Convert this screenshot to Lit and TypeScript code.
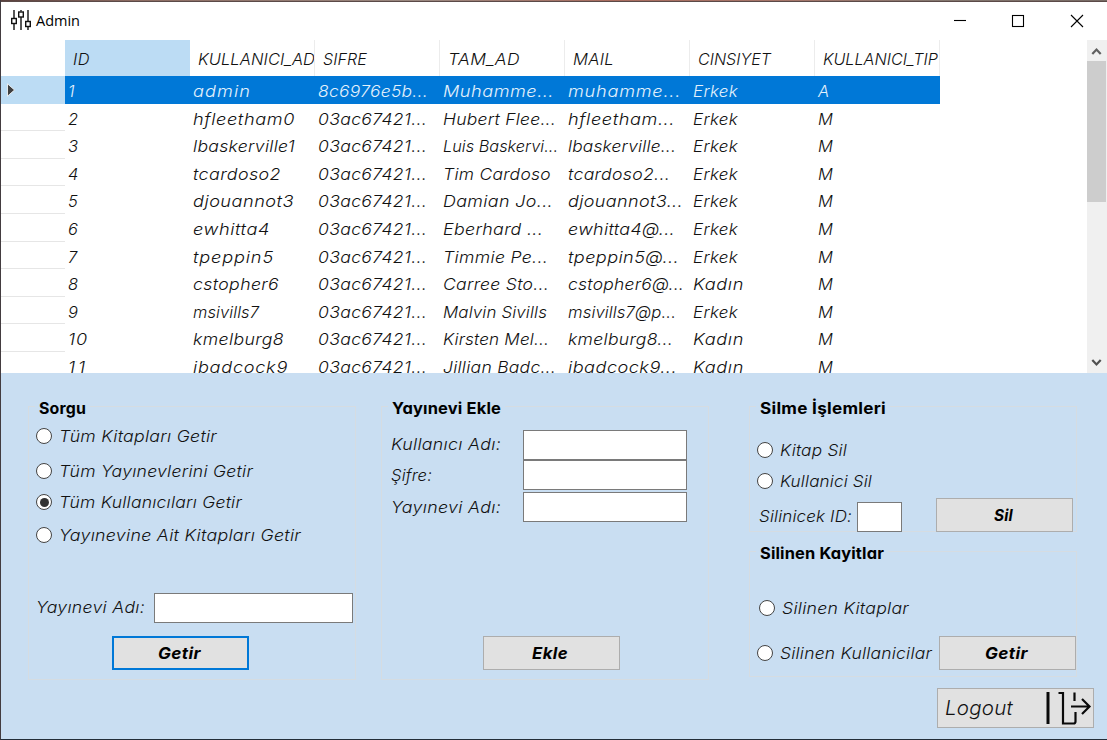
import { LitElement, html, css } from "lit";
import { customElement, property } from "lit/decorators.js";

/** A line of text spread over a given width, partly by glyph width, partly by letter spacing. */
@customElement("fit-text")
class FitText extends LitElement {
  @property() text = "";
  @property({ type: Number }) w = 0;

  static styles = css`
    :host { display: inline-block; white-space: pre; line-height: 20px; height: 20px; flex: none; }
    .run { display: inline-block; transform-origin: 0 50%; }
  `;

  updated() {
    const run = this.renderRoot.querySelector(".run") as HTMLElement;
    run.style.letterSpacing = "0px";
    run.style.transform = "none";
    const natural = run.getBoundingClientRect().width;
    const gaps = Array.from(this.text).length;
    this.style.width = this.w + "px";
    if (gaps < 2) return;
    const scale = Math.min(1.1, Math.max(0.92, 1 + (this.w / natural - 1) * 0.7));
    run.style.letterSpacing = ((this.w + 1) / scale - natural) / gaps + "px";
    run.style.transform = `scaleX(${scale})`;
  }

  render() {
    return html`<span class="run">${this.text}</span>`;
  }
}

type Cell = [string, number];

const HEAD: Cell[] = [["ID", 16], ["KULLANICI_AD", 116], ["SIFRE", 43], ["TAM_AD", 71], ["MAIL", 40], ["CINSIYET", 72], ["KULLANICI_TIP", 114]];

const USERS: [Cell, Cell, Cell, string][] = [
  [["admin", 57], ["Muhamme...", 110], ["muhamme...", 112], "Erkek"],
  [["hfleetham0", 101], ["Hubert Flee...", 112], ["hfleetham...", 106], "Erkek"],
  [["lbaskerville1", 101], ["Luis Baskervi...", 114], ["lbaskerville...", 107], "Erkek"],
  [["tcardoso2", 87], ["Tim Cardoso", 107], ["tcardoso2...", 101], "Erkek"],
  [["djouannot3", 100], ["Damian Jo...", 109], ["djouannot3...", 114], "Erkek"],
  [["ewhitta4", 76], ["Eberhard ...", 99], ["ewhitta4@...", 106], "Erkek"],
  [["tpeppin5", 80], ["Timmie Pe...", 104], ["tpeppin5@...", 110], "Erkek"],
  [["cstopher6", 85], ["Carree Sto...", 105], ["cstopher6@...", 115], "Kadın"],
  [["msivills7", 65], ["Malvin Sivills", 103], ["msivills7@p...", 107], "Erkek"],
  [["kmelburg8", 90], ["Kirsten Mel...", 105], ["kmelburg8...", 104], "Kadın"],
  [["ibadcock9", 94], ["Jillian Badc...", 112], ["ibadcock9...", 108], "Kadın"],
];

const t = (text: string, w: number) => html`<fit-text .text=${text} .w=${w}></fit-text>`;

const radio = (text: string, w: number, cls = "", on = false) => html`
  <label class="radio ${cls}"><span class="dot ${on ? "on" : ""}"></span>${t(text, w)}</label>`;

@customElement("app-root")
class AppRoot extends LitElement {
  static styles = css`
    :host {
      display: block; width: 1107px; height: 740px; overflow: hidden;
      font-family: Inter, "Open Sans", sans-serif; font-size: 16.5px; font-weight: 300; font-style: italic;
      font-feature-settings: "cv11" 1, "calt" 0; color: #111;
    }
    * { box-sizing: border-box; }
    .window {
      width: 1107px; height: 740px; display: flex; flex-direction: column;
      border-left: 1px solid #433c40; border-bottom: 1px solid #232d38; background: #c9def2;
    }
    .edge { height: 2px; flex: none; border-bottom: 1px solid #5b4a48; background: linear-gradient(90deg, #5a403d, #8d6c62 12%, #9a8880 38%, #a96c5e 55%, #a5766a 72%, #85776f 84%, #776a64); }
    .title { height: 38px; flex: none; background: #fff; display: flex; align-items: center; padding: 0 1px 2px 9px; }
    .title .name { font: 400 14.5px "Open Sans", sans-serif; color: #000; margin-left: 4px; font-feature-settings: normal; }
    .title .ctl { margin-left: auto; }
    .title svg { display: block; flex: none; }

    .grid { height: 333px; flex: none; display: flex; background: #fff; overflow: hidden; }
    .table { width: 939px; flex: none; overflow: hidden; }
    .thead { display: flex; height: 36.3px; }
    .corner { width: 63.5px; flex: none; }
    .th { width: 125px; flex: none; overflow: hidden; border-right: 1.5px solid #ececec; padding: 9px 0 0 8.5px; }
    .th.sel { background: #bcdcf4; border-color: #bcdcf4; }
    .tr { display: flex; height: 27.55px; }
    .rh { width: 63.5px; flex: none; border-bottom: 1px solid #e6e6e6; }
    .td { width: 125px; flex: none; overflow: hidden; padding: 5px 0 0 3.5px; }
    .tr.sel .td { background: #0078d7; color: #e4f1fc; }
    .tr.sel .rh { background: #bcdcf4; border-color: #bcdcf4; }
    .rh svg { display: block; margin: 7px 0 0 5px; }
    .scroll { width: 20px; margin-left: auto; background: #f0f0f0; display: flex; flex-direction: column; }
    .scroll svg { display: block; flex: none; }
    .thumb { height: 141px; width: 19px; background: #cdcdcd; margin-bottom: auto; }

    .panel { flex: 1; display: flex; align-items: flex-start; padding: 33px 0 0 27px; }
    .group { border: 1px solid #d5dce2; width: 328px; height: 274px; display: flex; flex-direction: column; align-items: flex-start; }
    .g2 { margin-left: 25px; }
    .side { margin-left: 40px; width: 345px; }
    .g3 { height: 126px; }
    .g4 { height: 126px; margin-top: 19px; }
    .legend { margin: -9px 0 0 6px; padding: 0 5px 0 4px; height: 20px; background: #c9def2; font-weight: 700; font-style: normal; color: #000; font-size: 16px; flex: none; }
    .row { display: flex; align-items: center; flex: none; }
    .radio { display: flex; align-items: center; height: 20px; gap: 7px; margin-left: 7px; flex: none; }
    .dot { width: 16px; height: 16px; border: 1.5px solid #444; border-radius: 50%; background: #fff; flex: none; display: flex; align-items: center; justify-content: center; }
    .dot.on::after { content: ""; width: 9px; height: 9px; border-radius: 50%; background: #333; }
    .input { height: 30px; background: #fff; border: 1px solid #7a7a7a; flex: none; }
    .btn { width: 137px; height: 34px; border: 1px solid #adadad; background: #e1e1e1; display: flex; align-items: center; justify-content: center; font-weight: 700; font-size: 16px; color: #000; flex: none; padding-right: 4px; }
    .btn.focus { border: 2px solid #0078d7; }

    .r1 { margin-top: 8px; } .r2 { margin-top: 15px; } .r3 { margin-top: 11px; } .r4 { margin-top: 13px; }
    .query { margin: 48px 0 0 7px; }
    .query .input { width: 199px; margin-left: 10px; }
    .query fit-text { margin-bottom: 2px; }
    .b1 { margin: 13px 0 0 83px; }
    .form { display: grid; grid-template-columns: 132px 164px; grid-template-rows: 30px 30px 32px; margin: 12px 0 0 9px; }
    .form .lab { padding-top: 4px; }
    .form .lab + .input + .lab { padding-top: 5px; }
    .form .last { margin-top: 2px; }
    .b2 { margin: 114px 0 0 101px; }
    .k1 { margin-top: 22px; } .k2 { margin-top: 11px; }
    .del { margin: 7px 0 0 9px; align-items: flex-end; }
    .del > fit-text { margin-bottom: 6px; }
    .del .input { width: 45px; margin-left: 6px; }
    .del .btn { margin-left: 34px; }
    .s1 { margin: 35px 0 0 9px; }
    .s2 { margin-top: 18px; }
    .s2 .btn { margin-left: 8px; }
    .logout { width: 157px; height: 40px; margin: 11px 0 0 188px; border: 1px solid #adadad; background: #e1e1e1; display: flex; align-items: center; padding-left: 7px; font-size: 20px; flex: none; }
    .logout svg { display: block; margin-left: auto; }
  `;

  private cell(c: Cell) {
    return html`<div class="td">${t(c[0], c[1])}</div>`;
  }

  private row(u: [Cell, Cell, Cell, string], i: number) {
    const sel = i === 0;
    return html`<div class="tr ${sel ? "sel" : ""}">
      <div class="rh">${sel ? html`<svg width="10" height="14" viewBox="0 0 10 14"><path d="M1.500 .8 8.500 7 1.500 13.200Z" fill="#3f3f3f" stroke="#fff" stroke-width=".8"/></svg>` : ""}</div>
      ${this.cell([String(i + 1), i > 8 ? 19 : 9])}
      ${this.cell(u[0])}
      ${this.cell(sel ? ["8c6976e5b...", 109] : ["03ac67421...", 108])}
      ${this.cell(u[1])}
      ${this.cell(u[2])}
      ${this.cell([u[3], u[3] === "Erkek" ? 44 : 50])}
      ${this.cell([sel ? "A" : "M", 14])}
    </div>`;
  }

  render() {
    return html`<div class="window">
      <div class="edge"></div>
      <div class="title">
        <svg width="22" height="22" viewBox="0 0 22 22" fill="none" stroke="#111" stroke-width="1.4">
          <path d="M4 1v8M4 15v6M11 1v1.500M11 8v13M18 1v11M18 18v3"/>
          <rect x="1.700" y="9.500" width="4.600" height="5"/><rect x="8.700" y="3" width="4.600" height="5"/><rect x="15.700" y="12.500" width="4.600" height="5"/>
        </svg>
        <span class="name">Admin</span>
        <svg class="ctl" width="160" height="20" viewBox="0 0 160 20" fill="none" stroke="#000" stroke-width="1.100">
          <path d="M8 10.500h12"/><rect x="66.500" y="5.500" width="11" height="11"/><path d="m125 5 12 12m0-12-12 12"/>
        </svg>
      </div>
      <div class="grid">
        <div class="table">
          <div class="thead"><div class="corner"></div>${HEAD.map((h, i) => html`<div class="th ${i ? "" : "sel"}">${t(h[0], h[1])}</div>`)}</div>
          ${USERS.map((u, i) => this.row(u, i))}
        </div>
        <div class="scroll">
          <svg width="20" height="21" viewBox="0 0 20 21" fill="none" stroke="#606060" stroke-width="2.200"><path d="m5.300 14 4.200-4.500 4.200 4.500"/></svg>
          <div class="thumb"></div>
          <svg width="20" height="21" viewBox="0 0 20 21" fill="none" stroke="#505050" stroke-width="2.200"><path d="m5.300 8 4.200 4.500L13.700 8"/></svg>
        </div>
      </div>
      <div class="panel">
        <div class="group">
          <div class="legend">${t("Sorgu", 46)}</div>
          ${radio("Tüm Kitapları Getir", 157, "r1")}
          ${radio("Tüm Yayınevlerini Getir", 193, "r2")}
          ${radio("Tüm Kullanıcıları Getir", 182, "r3", true)}
          ${radio("Yayınevine Ait Kitapları Getir", 241, "r4")}
          <div class="row query">${t("Yayınevi Adı:", 108)}<div class="input"></div></div>
          <div class="btn focus b1">${t("Getir", 42)}</div>
        </div>
        <div class="group g2">
          <div class="legend">${t("Yayınevi Ekle", 108)}</div>
          <div class="form">
            <div class="lab">${t("Kullanıcı Adı:", 109)}</div><div class="input"></div>
            <div class="lab">${t("Şifre:", 40)}</div><div class="input"></div>
            <div class="lab last">${t("Yayınevi Adı:", 109)}</div><div class="input last"></div>
          </div>
          <div class="btn b2">${t("Ekle", 35)}</div>
        </div>
        <div class="side">
          <div class="group g3">
            <div class="legend">${t("Silme İşlemleri", 125)}</div>
            ${radio("Kitap Sil", 66, "k1")}
            ${radio("Kullanici Sil", 91, "k2")}
            <div class="row del">${t("Silinicek ID:", 92)}<div class="input"></div><div class="btn">${t("Sil", 18)}</div></div>
          </div>
          <div class="group g4">
            <div class="legend">${t("Silinen Kayitlar", 123)}</div>
            ${radio("Silinen Kitaplar", 126, "s1")}
            <div class="row s2">${radio("Silinen Kullanicilar", 151)}<div class="btn">${t("Getir", 42)}</div></div>
          </div>
          <div class="logout">${t("Logout", 67)}
            <svg width="48" height="36" viewBox="0 0 48 36" fill="none" stroke="#0a0a0a">
              <path d="M3 2v32" stroke-width="3"/>
              <path d="M13.500 3H18v30.500h10.500q2 0 2-2V22M29.500 2.500v8.500" stroke-width="2.200"/>
              <path d="M26 16.500h18M37 9l7.500 7.500L37 24" stroke-width="2.200"/>
            </svg>
          </div>
        </div>
      </div>
    </div>`;
  }
}
